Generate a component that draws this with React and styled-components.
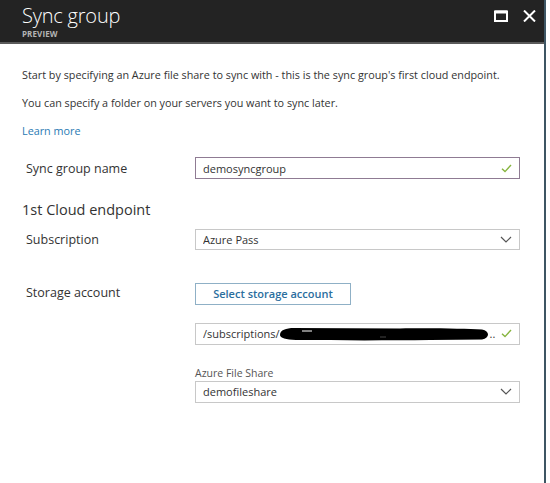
import React from "react";
import styled, { createGlobalStyle } from "styled-components";

const Global = createGlobalStyle`
  html, body { margin: 0; padding: 0; background: #fff; }
  body { font-family: "Open Sans", "Noto Sans", sans-serif; }
`;

const Blade = styled.div`
  width: 546px;
  height: 483px;
  box-sizing: border-box;
  border-right: 2px solid #3d5563;
  background: #fff;
  display: flex;
  flex-direction: column;
`;

const Header = styled.header`
  height: 42px;
  background: #232323;
  border-bottom: 2px solid #5a5a5a;
  display: flex;
  align-items: flex-start;
  justify-content: space-between;
  padding: 0 8px 0 22px;
`;

const TitleBlock = styled.div`
  display: flex;
  flex-direction: column;
  padding-top: 3px;
`;

const Title = styled.h1`
  margin: 0;
  font-weight: 300;
  font-size: 20px;
  line-height: 26px;
  color: #fff;
  letter-spacing: -0.2px;
`;

const Sub = styled.span`
  font-size: 8px;
  font-weight: 700;
  color: #b4b4b4;
  line-height: 10px;
  letter-spacing: 0.1px;
`;

const Controls = styled.div`
  display: flex;
  gap: 15px;
  padding-top: 10px;
`;

const Body = styled.div`
  padding: 0 22px;
  display: flex;
  flex-direction: column;
`;

const Para = styled.p`
  margin: 0;
  font-size: 10.8px;
  line-height: 28px;
  color: #333;
  &:first-child { margin-top: 17px; }
`;

const Link = styled.a`
  font-size: 10.8px;
  line-height: 28px;
  color: #2a7ab4;
  text-decoration: none;
`;

const Row = styled.div`
  display: grid;
  grid-template-columns: 169px 325px;
  align-items: center;
  margin-top: ${(p) => p.$mt || 0}px;
  padding-left: 4px;
`;

const Label = styled.div`
  font-size: 12.5px;
  color: #333;
`;

const Section = styled.div`
  font-size: 14.5px;
  color: #333;
  margin-top: ${(p) => p.$mt || 0}px;
  line-height: 20px;
`;

const Field = styled.div`
  height: ${(p) => p.$h || 20}px;
  box-sizing: border-box;
  border: 1px solid ${(p) => (p.$focus ? "#8f7b93" : "#c8c8c8")};
  display: flex;
  align-items: center;
  padding: 0 7px;
  font-size: 11px;
  color: #333;
  gap: 4px;
`;

const Value = styled.span`
  flex: 1;
  white-space: nowrap;
  overflow: hidden;
  display: flex;
  align-items: center;
`;

const Stack = styled.div`
  display: flex;
  flex-direction: column;
  grid-column: 2;
  margin-top: ${(p) => p.$mt || 0}px;
`;

const SmallLabel = styled.div`
  font-size: 10.5px;
  color: #555;
  line-height: 14px;
  margin-bottom: 1px;
`;

const Button = styled.button`
  width: 156px;
  height: 22px;
  border: 1px solid #8fb0c6;
  background: #fff;
  color: #2b6e9e;
  font-family: inherit;
  font-size: 11px;
  font-weight: 600;
  padding: 0;
`;

const Check = () => (
  <svg width="11" height="9" viewBox="0 0 11 9">
    <path d="M1 4.8 L4 7.6 L10 1" fill="none" stroke="#86b43e" strokeWidth="1.4" />
  </svg>
);

const Chevron = () => (
  <svg width="12" height="7" viewBox="0 0 12 7">
    <path d="M1 1 L6 6 L11 1" fill="none" stroke="#555" strokeWidth="1.2" />
  </svg>
);

const Maximize = () => (
  <svg width="14" height="12" viewBox="0 0 14 12">
    <rect x="1" y="1.5" width="12" height="9.5" fill="none" stroke="#fff" strokeWidth="2" />
    <rect x="1" y="0.5" width="12" height="3" fill="#fff" />
  </svg>
);

const Close = () => (
  <svg width="13" height="12" viewBox="0 0 13 12">
    <path d="M1 0.5 L12 11.5 M12 0.5 L1 11.5" stroke="#fff" strokeWidth="2" />
  </svg>
);

const Redaction = () => (
  <svg width="210" height="16" viewBox="0 0 210 16">
    <path
      d="M0 9 C0 4 6 2 14 2 L120 2.5 C160 2 185 3 202 3.5 C210 5 210 12 202 13.5 L150 14 C110 14.5 60 14.5 16 14 C6 13.5 0 12 0 9 Z"
      fill="#000"
    />
    <path d="M22 5 L32 5" stroke="#fff" strokeWidth="1" />
    <path d="M100 11 L106 11" stroke="#444" strokeWidth="1" />
  </svg>
);

export default function App() {
  return (
    <>
      <Global />
      <Blade>
        <Header>
          <TitleBlock>
            <Title>Sync group</Title>
            <Sub>PREVIEW</Sub>
          </TitleBlock>
          <Controls>
            <Maximize />
            <Close />
          </Controls>
        </Header>
        <Body>
          <div>
            <Para>
              Start by specifying an Azure file share to sync with - this is the sync group's first cloud endpoint.
            </Para>
            <Para>You can specify a folder on your servers you want to sync later.</Para>
            <Link href="#">Learn more</Link>
          </div>
          <Row $mt={12}>
            <Label>Sync group name</Label>
            <Field $focus $h={22}>
              <Value>demosyncgroup</Value>
              <Check />
            </Field>
          </Row>
          <Section $mt={21}>1st Cloud endpoint</Section>
          <Row $mt={9}>
            <Label>Subscription</Label>
            <Field $h={21}>
              <Value>Azure Pass</Value>
              <Chevron />
            </Field>
          </Row>
          <Row $mt={31}>
            <Label>Storage account</Label>
            <div>
              <Button>Select storage account</Button>
            </div>
          </Row>
          <Row>
            <Stack $mt={18}>
              <Field $h={22}>
                <Value>
                  /subscriptions/
                  <Redaction />
                  ..
                </Value>
                <Check />
              </Field>
            </Stack>
          </Row>
          <Row>
            <Stack $mt={21}>
              <SmallLabel>Azure File Share</SmallLabel>
              <Field $h={22}>
                <Value>demofileshare</Value>
                <Chevron />
              </Field>
            </Stack>
          </Row>
        </Body>
      </Blade>
    </>
  );
}
